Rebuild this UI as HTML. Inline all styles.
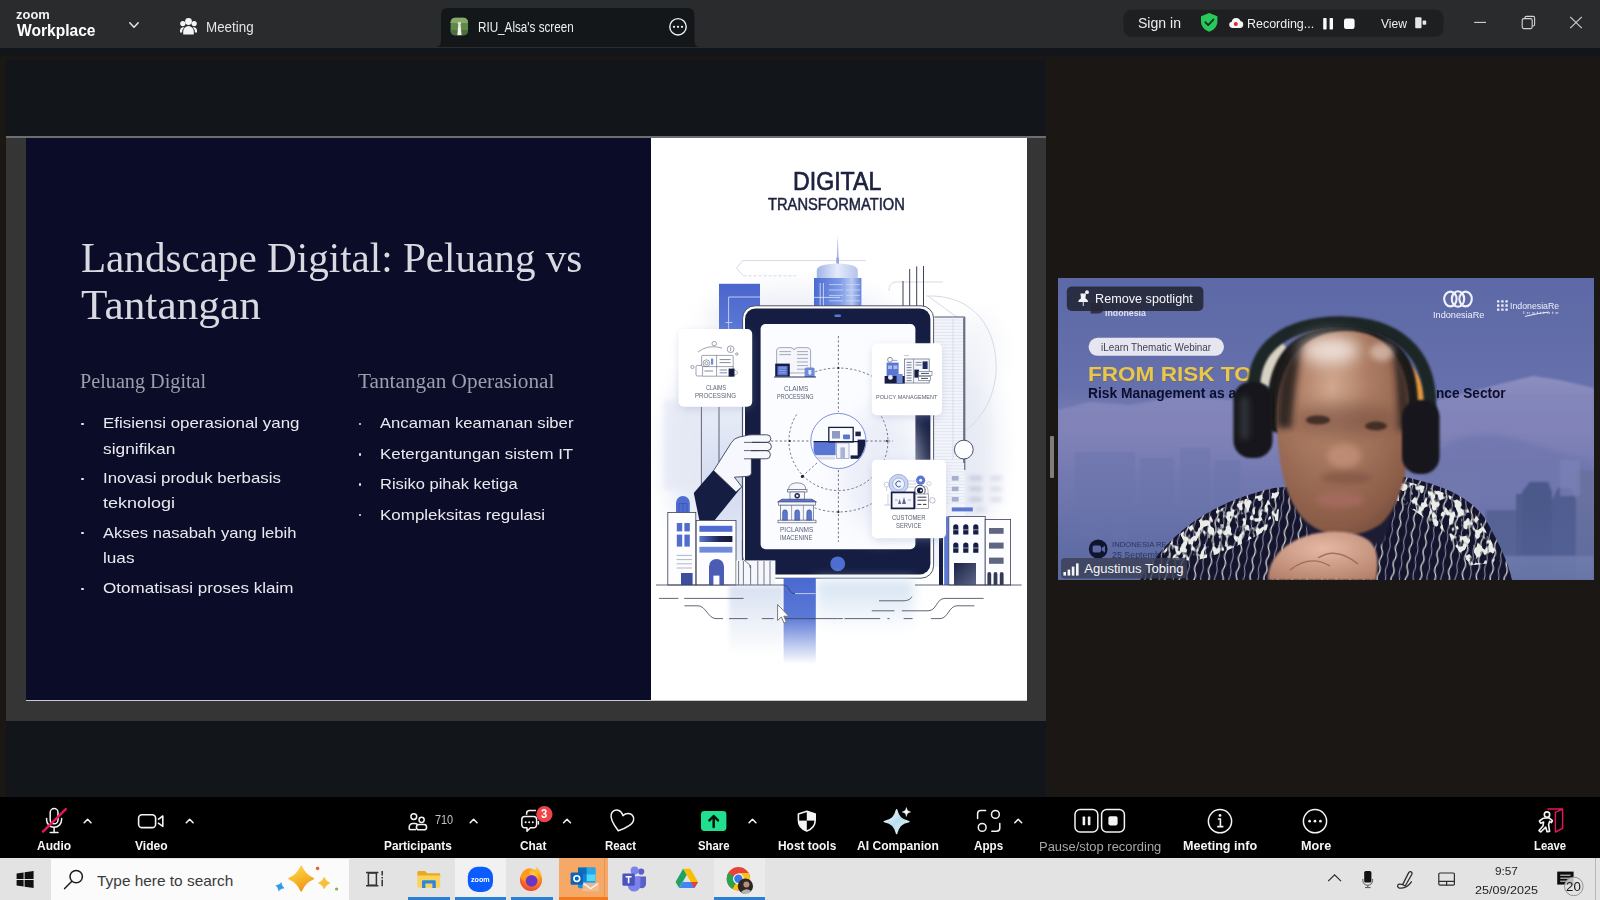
<!DOCTYPE html>
<html lang="en"><head><meta charset="utf-8"><title>Zoom Workplace</title>
<style>
html,body{margin:0;padding:0}
body{width:1600px;height:900px;overflow:hidden;background:#1a1715;position:relative;font-family:"Liberation Sans",sans-serif}
.b{position:absolute}
.t{position:absolute;white-space:pre;transform-origin:0 50%;display:block}
svg{position:absolute;left:0;top:0;overflow:visible}
</style></head><body>
<!-- s_frame -->
<div class="b" style="left:0px;top:0px;width:1600px;height:47.5px;background:#2a2b2d;"></div>
<div class="b" style="left:0px;top:47.5px;width:1600px;height:8.100000000000001px;background:#12161a;"></div>
<div class="b" style="left:6px;top:60px;width:1040px;height:737px;background:#12161a;"></div>
<svg width="1600" height="60"><path d="M435 47 Q441 47 441 41 L441 15 Q441 8 448 8 L687 8 Q694.5 8 694.5 15 L694.5 41 Q694.5 47 700.5 47 Z" fill="#13171a"/></svg>
<span class="t" style="left:15.98px;top:8px;font-size:13.20px;line-height:13.20px;font-family:'Liberation Sans',sans-serif;font-weight:700;color:#f2f2f2;transform:scaleX(0.9814);">zoom</span>
<span class="t" style="left:16.98px;top:22px;font-size:17.15px;line-height:17.15px;font-family:'Liberation Sans',sans-serif;font-weight:700;color:#ffffff;transform:scaleX(0.9089);">Workplace</span>
<svg width="1600" height="60"><path d="M129.8 22.8 L134 27.2 L138.2 22.8" fill="none" stroke="#e8e8e8" stroke-width="1.5" stroke-linecap="round" stroke-linejoin="round"/>
<g fill="#f4f4f4"><circle cx="188.5" cy="21.5" r="3.4"/><circle cx="182.8" cy="23.6" r="2.6"/><circle cx="194.2" cy="23.6" r="2.6"/><path d="M183.2 34.6 v-3.2 a5.3 5.3 0 0 1 10.6 0 v3.2 z"/><path d="M180 32.6 v-2.2 a3.3 3.3 0 0 1 4.3 -3.1 a7 7 0 0 0 -2.2 5.3 z"/><path d="M197 32.6 v-2.2 a3.3 3.3 0 0 0 -4.3 -3.1 a7 7 0 0 1 2.2 5.3 z"/></g>
<g><clipPath id="avc"><rect x="450.6" y="17.8" width="17.4" height="17.4" rx="4.5"/></clipPath><g clip-path="url(#avc)"><rect x="450" y="17" width="19" height="19" fill="#5f8a4a"/><rect x="450" y="17" width="19" height="6" fill="#86a868"/><rect x="450" y="30" width="19" height="6" fill="#4d6f3f"/><path d="M457.3 35.5 L458.2 25.5 Q459.3 22 460.6 25.5 L461.6 35.5 Z" fill="#f1f1ee"/><circle cx="459.4" cy="23.4" r="1.7" fill="#e9ddd0"/></g></g>
<g><circle cx="678" cy="26.8" r="8.2" fill="none" stroke="#f0f0f0" stroke-width="1.4"/><circle cx="674" cy="26.8" r="1.15" fill="#f0f0f0"/><circle cx="678" cy="26.8" r="1.15" fill="#f0f0f0"/><circle cx="682" cy="26.8" r="1.15" fill="#f0f0f0"/></g>
<rect x="1123.5" y="9.8" width="320" height="27" rx="8" fill="#1e1f21"/>
<path d="M1209.2 13 L1217.4 16.2 V21.5 C1217.4 26.6 1213.6 30.2 1209.2 31.8 C1204.8 30.2 1201 26.6 1201 21.5 V16.2 Z" fill="#28c95a"/><path d="M1205.3 22.2 L1208.2 25.1 L1213.4 19.6" fill="none" stroke="#10351e" stroke-width="1.9" stroke-linecap="round" stroke-linejoin="round"/>
<path d="M1232 28 a3.2 3.2 0 0 1 -0.3 -6.3 a4.6 4.6 0 0 1 8.8 -0.8 a3.6 3.6 0 0 1 -0.6 7.1 z" fill="#f6f6f6"/><circle cx="1235.8" cy="24" r="2" fill="#e02828"/>
<rect x="1323.2" y="18" width="3.4" height="11.6" rx="0.8" fill="#fafafa"/><rect x="1329.6" y="18" width="3.4" height="11.6" rx="0.8" fill="#fafafa"/><rect x="1344" y="18.6" width="10.6" height="10.4" rx="2.2" fill="#fafafa"/>
<rect x="1415.2" y="17.2" width="6.3" height="11" rx="1" fill="#e6e6e6"/><rect x="1422.6" y="20.6" width="3.6" height="4.2" rx="0.8" fill="#e6e6e6"/>
<g stroke="#d4d4d4" stroke-width="1.1" fill="none"><path d="M1474.2 22.4 H1486"/><rect x="1522.2" y="18.6" width="10" height="10" rx="1.6"/><path d="M1525 18.4 V17.6 Q1525 16.4 1526.4 16.4 H1533.2 Q1534.6 16.4 1534.6 17.8 V24.6 Q1534.6 26 1533.2 26 H1532.4"/><path d="M1570.2 16.8 L1581.8 28.2 M1581.8 16.8 L1570.2 28.2"/></g></svg>
<span class="t" style="left:206.20px;top:21px;font-size:13.95px;line-height:13.95px;font-family:'Liberation Sans',sans-serif;font-weight:400;color:#e4e4e4;transform:scaleX(0.9603);">Meeting</span>
<span class="t" style="left:477.64px;top:20px;font-size:14.24px;line-height:14.24px;font-family:'Liberation Sans',sans-serif;font-weight:400;color:#efefef;transform:scaleX(0.8203);">RIU_Alsa&#x27;s screen</span>
<span class="t" style="left:1137.56px;top:16px;font-size:14.83px;line-height:14.83px;font-family:'Liberation Sans',sans-serif;font-weight:400;color:#eeeeee;transform:scaleX(0.9472);">Sign in</span>
<span class="t" style="left:1247.38px;top:17px;font-size:13.66px;line-height:13.66px;font-family:'Liberation Sans',sans-serif;font-weight:400;color:#eeeeee;transform:scaleX(0.9119);">Recording...</span>
<span class="t" style="left:1380.95px;top:17px;font-size:13.66px;line-height:13.66px;font-family:'Liberation Sans',sans-serif;font-weight:400;color:#eeeeee;transform:scaleX(0.8863);">View</span>
<div class="b" style="left:1050px;top:436px;width:4px;height:42px;background:#807e7c;border-radius:1px;"></div>
<!-- s_slide -->
<div class="b" style="left:6px;top:136px;width:1040px;height:585px;background:#353535;"></div>
<div class="b" style="left:6px;top:136px;width:1040px;height:2px;background:#6d6e70;"></div>
<div class="b" style="left:26px;top:138px;width:625px;height:562px;background:#0b0c27;"></div>
<div class="b" style="left:651px;top:138px;width:376px;height:562px;background:#ffffff;"></div>
<div class="b" style="left:26px;top:700px;width:1001px;height:1px;background:#c9c9cf;"></div>
<span class="t" style="left:80.51px;top:237px;font-size:42.14px;line-height:42.14px;font-family:'Liberation Serif',serif;font-weight:400;color:#d9d9e2;transform:scaleX(0.9761);">Landscape Digital: Peluang vs</span>
<span class="t" style="left:80.92px;top:284px;font-size:42.14px;line-height:42.14px;font-family:'Liberation Serif',serif;font-weight:400;color:#d9d9e2;transform:scaleX(1.0288);">Tantangan</span>
<span class="t" style="left:80.42px;top:371px;font-size:20.00px;line-height:20.00px;font-family:'Liberation Serif',serif;font-weight:400;color:#9d9eab;transform:scaleX(1.0097);">Peluang Digital</span>
<span class="t" style="left:358.02px;top:371px;font-size:20.00px;line-height:20.00px;font-family:'Liberation Serif',serif;font-weight:400;color:#9d9eab;transform:scaleX(1.0638);">Tantangan Operasional</span>
<span class="t" style="left:102.60px;top:415px;font-size:15.41px;line-height:15.41px;font-family:'Liberation Sans',sans-serif;font-weight:400;color:#e9e9ef;transform:scaleX(1.0975);">Efisiensi operasional yang</span>
<span class="t" style="left:102.60px;top:441px;font-size:15.41px;line-height:15.41px;font-family:'Liberation Sans',sans-serif;font-weight:400;color:#e9e9ef;transform:scaleX(1.1258);">signifikan</span>
<span class="t" style="left:102.60px;top:470px;font-size:15.41px;line-height:15.41px;font-family:'Liberation Sans',sans-serif;font-weight:400;color:#e9e9ef;transform:scaleX(1.0937);">Inovasi produk berbasis</span>
<span class="t" style="left:102.60px;top:495px;font-size:15.41px;line-height:15.41px;font-family:'Liberation Sans',sans-serif;font-weight:400;color:#e9e9ef;transform:scaleX(1.1674);">teknologi</span>
<span class="t" style="left:102.60px;top:525px;font-size:15.41px;line-height:15.41px;font-family:'Liberation Sans',sans-serif;font-weight:400;color:#e9e9ef;transform:scaleX(1.0754);">Akses nasabah yang lebih</span>
<span class="t" style="left:102.60px;top:550px;font-size:15.41px;line-height:15.41px;font-family:'Liberation Sans',sans-serif;font-weight:400;color:#e9e9ef;transform:scaleX(1.1150);">luas</span>
<span class="t" style="left:102.60px;top:580px;font-size:15.41px;line-height:15.41px;font-family:'Liberation Sans',sans-serif;font-weight:400;color:#e9e9ef;transform:scaleX(1.1068);">Otomatisasi proses klaim</span>
<span class="t" style="left:380.40px;top:415px;font-size:15.41px;line-height:15.41px;font-family:'Liberation Sans',sans-serif;font-weight:400;color:#e9e9ef;transform:scaleX(1.0807);">Ancaman keamanan siber</span>
<span class="t" style="left:380.40px;top:446px;font-size:15.41px;line-height:15.41px;font-family:'Liberation Sans',sans-serif;font-weight:400;color:#e9e9ef;transform:scaleX(1.0948);">Ketergantungan sistem IT</span>
<span class="t" style="left:380.40px;top:476px;font-size:15.41px;line-height:15.41px;font-family:'Liberation Sans',sans-serif;font-weight:400;color:#e9e9ef;transform:scaleX(1.0710);">Risiko pihak ketiga</span>
<span class="t" style="left:380.40px;top:507px;font-size:15.41px;line-height:15.41px;font-family:'Liberation Sans',sans-serif;font-weight:400;color:#e9e9ef;transform:scaleX(1.1018);">Kompleksitas regulasi</span>
<div class="b" style="left:81.4px;top:422.7px;width:2.299999999999997px;height:2.3000000000000114px;background:#e8e8f0;border-radius:1px;"></div>
<div class="b" style="left:81.4px;top:477.7px;width:2.299999999999997px;height:2.3000000000000114px;background:#e8e8f0;border-radius:1px;"></div>
<div class="b" style="left:81.4px;top:532.0px;width:2.299999999999997px;height:2.2999999999999545px;background:#e8e8f0;border-radius:1px;"></div>
<div class="b" style="left:81.4px;top:587.7px;width:2.299999999999997px;height:2.2999999999999545px;background:#e8e8f0;border-radius:1px;"></div>
<div class="b" style="left:359px;top:422.8px;width:2.3000000000000114px;height:2.3000000000000114px;background:#e8e8f0;border-radius:1px;"></div>
<div class="b" style="left:359px;top:453.4px;width:2.3000000000000114px;height:2.3000000000000114px;background:#e8e8f0;border-radius:1px;"></div>
<div class="b" style="left:359px;top:483.4px;width:2.3000000000000114px;height:2.3000000000000114px;background:#e8e8f0;border-radius:1px;"></div>
<div class="b" style="left:359px;top:514.0px;width:2.3000000000000114px;height:2.2999999999999545px;background:#e8e8f0;border-radius:1px;"></div>
<!-- s_illus -->
<svg width="1600" height="900">
<defs><clipPath id="ilc"><rect x="651" y="138" width="376" height="562"/></clipPath><filter id="bl6" x="-30%" y="-30%" width="160%" height="160%"><feGaussianBlur stdDeviation="6"/></filter><filter id="bl12" x="-40%" y="-40%" width="180%" height="180%"><feGaussianBlur stdDeviation="12"/></filter><filter id="bl2" x="-30%" y="-30%" width="160%" height="160%"><feGaussianBlur stdDeviation="2"/></filter><filter id="sh" x="-30%" y="-30%" width="160%" height="160%"><feGaussianBlur stdDeviation="4"/></filter><linearGradient id="gb1" x1="0" y1="0" x2="0" y2="1"><stop offset="0" stop-color="#4a66cc"/><stop offset="0.55" stop-color="#6f8cdf"/><stop offset="1" stop-color="#c9d4f0"/></linearGradient><linearGradient id="gtw" x1="0" y1="0" x2="1" y2="0"><stop offset="0" stop-color="#4c6bd0"/><stop offset="0.55" stop-color="#7d9ae6"/><stop offset="0.8" stop-color="#b9c9f2"/><stop offset="1" stop-color="#6482d8"/></linearGradient><linearGradient id="gdm" x1="0" y1="0" x2="1" y2="0"><stop offset="0" stop-color="#9fb3e6"/><stop offset="0.5" stop-color="#e4ebfa"/><stop offset="1" stop-color="#b5c4ec"/></linearGradient><linearGradient id="gcol" x1="0" y1="0" x2="0" y2="1"><stop offset="0" stop-color="#4a69d0"/><stop offset="0.45" stop-color="#5a78d6"/><stop offset="1" stop-color="#5a78d6" stop-opacity="0"/></linearGradient><linearGradient id="ghz" x1="0" y1="0" x2="0" y2="1"><stop offset="0" stop-color="#d9e1f1"/><stop offset="1" stop-color="#d9e1f1" stop-opacity="0"/></linearGradient><linearGradient id="ghz2" x1="0" y1="0" x2="0" y2="1"><stop offset="0" stop-color="#d3e2f2"/><stop offset="1" stop-color="#d3e2f2" stop-opacity="0"/></linearGradient><linearGradient id="gpil" x1="0" y1="0" x2="0" y2="1"><stop offset="0" stop-color="#e9edf8"/><stop offset="0.5" stop-color="#d3dbf0"/><stop offset="1" stop-color="#e8ecf7"/></linearGradient><linearGradient id="gdoor" x1="0" y1="0" x2="1" y2="1"><stop offset="0" stop-color="#1a2244"/><stop offset="1" stop-color="#5d6788"/></linearGradient><linearGradient id="gbar2" x1="0" y1="0" x2="1" y2="0"><stop offset="0" stop-color="#5a78d4"/><stop offset="0.6" stop-color="#1c2550"/><stop offset="1" stop-color="#131a3c"/></linearGradient></defs>
<g clip-path="url(#ilc)">
<ellipse cx="800" cy="322" rx="95" ry="34" fill="#e9ecf6" opacity="0.8" filter="url(#bl12)"/><ellipse cx="962" cy="450" rx="34" ry="95" fill="#e4e8f3" opacity="0.9" filter="url(#bl12)"/><ellipse cx="700" cy="455" rx="34" ry="80" fill="#e3e8f5" opacity="0.85" filter="url(#bl12)"/><ellipse cx="975" cy="350" rx="22" ry="36" fill="#eef0f7" opacity="0.7" filter="url(#bl12)"/>
<g fill="none" stroke="#d6dae6" stroke-width="1"><path d="M742.6 260.6 H866 M736.4 268.4 L742.6 260.6 M736.4 268.4 L743.6 275.8" /><path d="M743.6 275.8 H796" stroke-dasharray="3 2"/><path d="M926 296 C975 294 998 330 996 372 C994 400 980 420 966 430"/><path d="M895 282 H943 M895 282 q-6 1 -6 9"/><path d="M928 296 L958 318"/></g>
<rect x="719" y="283.8" width="41" height="180" fill="url(#gb1)"/><path d="M728.6 331 V297 H760" fill="none" stroke="#c9d5f6" stroke-width="0.9"/><path d="M725.6 322.6 H732.4" stroke="#c9d5f6" stroke-width="0.9"/>
<rect x="701.4" y="406" width="41" height="160" fill="url(#gpil)"/><rect x="664" y="400" width="38" height="90" fill="#e4e8f4" opacity="0.7" filter="url(#bl2)"/><g stroke="#3b4056" stroke-width="0.8"><path d="M701.4 407 V500 M719 407 V470 M742.4 407 V560"/></g>
<path d="M837.7 235.4 L836.6 262 H838.8 Z" fill="#aab9e2"/><rect x="836.4" y="257.6" width="2.6" height="6.6" fill="#93a6dc"/><path d="M816.8 278.4 V270.4 Q816.8 264 837.6 263.4 Q857.8 264 857.8 270.4 V278.4 Z" fill="url(#gdm)"/><rect x="814" y="278" width="47.4" height="30" fill="url(#gtw)"/><g stroke="#dfe7fb" stroke-width="0.8"><path d="M820.2 283 V306 M823.4 283 V306 M814 297.4 H840"/><path d="M829 284.6 H843 M829 290 H843 M829 295.4 H843 M829 300.8 H843 M846 284.6 H860 M846 290 H860 M846 295.4 H860 M846 300.8 H860" stroke="#cbd8f8"/></g>
<g stroke="#3b4056" stroke-width="1"><path d="M903 281 V306 M909.7 269 V306 M916.7 266.4 V306 M923.5 266 V306"/></g>
<rect x="934.4" y="317" width="30.4" height="250" fill="#f3f5fb"/><path d="M934.4 320.0 H964.8" stroke="#d5dbec" stroke-width="0.6"/><path d="M934.4 323.1 H964.8" stroke="#d5dbec" stroke-width="0.6"/><path d="M934.4 326.2 H964.8" stroke="#d5dbec" stroke-width="0.6"/><path d="M934.4 329.3 H964.8" stroke="#d5dbec" stroke-width="0.6"/><path d="M934.4 332.4 H964.8" stroke="#d5dbec" stroke-width="0.6"/><path d="M934.4 335.5 H964.8" stroke="#d5dbec" stroke-width="0.6"/><path d="M934.4 338.6 H964.8" stroke="#d5dbec" stroke-width="0.6"/><path d="M934.4 341.7 H964.8" stroke="#d5dbec" stroke-width="0.6"/><path d="M934.4 344.8 H964.8" stroke="#d5dbec" stroke-width="0.6"/><path d="M934.4 347.9 H964.8" stroke="#d5dbec" stroke-width="0.6"/><path d="M934.4 351.0 H964.8" stroke="#d5dbec" stroke-width="0.6"/><path d="M934.4 354.1 H964.8" stroke="#d5dbec" stroke-width="0.6"/><path d="M934.4 357.2 H964.8" stroke="#d5dbec" stroke-width="0.6"/><path d="M934.4 360.3 H964.8" stroke="#d5dbec" stroke-width="0.6"/><path d="M934.4 363.4 H964.8" stroke="#d5dbec" stroke-width="0.6"/><path d="M934.4 366.5 H964.8" stroke="#d5dbec" stroke-width="0.6"/><path d="M934.4 369.6 H964.8" stroke="#d5dbec" stroke-width="0.6"/><path d="M934.4 372.7 H964.8" stroke="#d5dbec" stroke-width="0.6"/><path d="M934.4 375.8 H964.8" stroke="#d5dbec" stroke-width="0.6"/><path d="M934.4 378.9 H964.8" stroke="#d5dbec" stroke-width="0.6"/><path d="M934.4 382.0 H964.8" stroke="#d5dbec" stroke-width="0.6"/><path d="M934.4 385.1 H964.8" stroke="#d5dbec" stroke-width="0.6"/><path d="M934.4 388.2 H964.8" stroke="#d5dbec" stroke-width="0.6"/><path d="M934.4 391.3 H964.8" stroke="#d5dbec" stroke-width="0.6"/><path d="M934.4 394.4 H964.8" stroke="#d5dbec" stroke-width="0.6"/><path d="M934.4 397.5 H964.8" stroke="#d5dbec" stroke-width="0.6"/><path d="M934.4 400.6 H964.8" stroke="#d5dbec" stroke-width="0.6"/><path d="M934.4 403.7 H964.8" stroke="#d5dbec" stroke-width="0.6"/><path d="M934.4 406.8 H964.8" stroke="#d5dbec" stroke-width="0.6"/><path d="M934.4 409.9 H964.8" stroke="#d5dbec" stroke-width="0.6"/><path d="M934.4 413.0 H964.8" stroke="#d5dbec" stroke-width="0.6"/><path d="M934.4 416.1 H964.8" stroke="#d5dbec" stroke-width="0.6"/><path d="M934.4 419.2 H964.8" stroke="#d5dbec" stroke-width="0.6"/><path d="M934.4 422.3 H964.8" stroke="#d5dbec" stroke-width="0.6"/><path d="M934.4 425.4 H964.8" stroke="#d5dbec" stroke-width="0.6"/><path d="M934.4 428.5 H964.8" stroke="#d5dbec" stroke-width="0.6"/><path d="M934.4 431.6 H964.8" stroke="#d5dbec" stroke-width="0.6"/><path d="M934.4 434.7 H964.8" stroke="#d5dbec" stroke-width="0.6"/><path d="M934.4 437.8 H964.8" stroke="#d5dbec" stroke-width="0.6"/><path d="M934.4 440.9 H964.8" stroke="#d5dbec" stroke-width="0.6"/><path d="M934.4 444.0 H964.8" stroke="#d5dbec" stroke-width="0.6"/><path d="M934.4 447.1 H964.8" stroke="#d5dbec" stroke-width="0.6"/><path d="M934.4 450.2 H964.8" stroke="#d5dbec" stroke-width="0.6"/><path d="M934.4 453.3 H964.8" stroke="#d5dbec" stroke-width="0.6"/><path d="M934.4 456.4 H964.8" stroke="#d5dbec" stroke-width="0.6"/><path d="M934.4 459.5 H964.8" stroke="#d5dbec" stroke-width="0.6"/><path d="M934.4 462.6 H964.8" stroke="#d5dbec" stroke-width="0.6"/><path d="M934.4 465.7 H964.8" stroke="#d5dbec" stroke-width="0.6"/><path d="M934.4 468.8 H964.8" stroke="#d5dbec" stroke-width="0.6"/><path d="M934.4 471.9 H964.8" stroke="#d5dbec" stroke-width="0.6"/><path d="M934.4 475.0 H964.8" stroke="#d5dbec" stroke-width="0.6"/><path d="M934.4 478.1 H964.8" stroke="#d5dbec" stroke-width="0.6"/><path d="M934.4 481.2 H964.8" stroke="#d5dbec" stroke-width="0.6"/><path d="M934.4 484.3 H964.8" stroke="#d5dbec" stroke-width="0.6"/><path d="M934.4 487.4 H964.8" stroke="#d5dbec" stroke-width="0.6"/><path d="M934.4 490.5 H964.8" stroke="#d5dbec" stroke-width="0.6"/><path d="M934.4 493.6 H964.8" stroke="#d5dbec" stroke-width="0.6"/><path d="M934.4 496.7 H964.8" stroke="#d5dbec" stroke-width="0.6"/><path d="M934.4 499.8 H964.8" stroke="#d5dbec" stroke-width="0.6"/><path d="M934.4 502.9 H964.8" stroke="#d5dbec" stroke-width="0.6"/><path d="M934.4 317 H964.8 V470" fill="none" stroke="#3b4056" stroke-width="0.9"/><path d="M953 317 V460" stroke="#c9d0e4" stroke-width="0.6"/>
<g fill="#a7afca"><rect x="951.8" y="476" width="6.8" height="4.6"/><rect x="951.8" y="486.6" width="6.8" height="4.6"/><rect x="951.8" y="497" width="6.8" height="4.6"/></g><g fill="#c4cade" filter="url(#bl2)"><rect x="969" y="476" width="13" height="4.6"/><rect x="969" y="486.6" width="13" height="4.6"/><rect x="969" y="497" width="13" height="4.6"/><rect x="990" y="476" width="12" height="4.6" opacity="0.6"/><rect x="990" y="486.6" width="12" height="4.6" opacity="0.6"/><rect x="990" y="497" width="12" height="4.6" opacity="0.6"/><rect x="975" y="507" width="10" height="4.6" opacity="0.6"/></g><rect x="951.8" y="507.4" width="21" height="4" fill="#5a78d4"/>
<path d="M963.8 318 V440" stroke="#3b4056" stroke-width="0.9"/><circle cx="963.8" cy="449.6" r="9.4" fill="#fdfdff" stroke="#3b4056" stroke-width="0.9"/><path d="M963.8 459 V463" stroke="#3b4056" stroke-width="0.9"/>
<rect x="939" y="538" width="4" height="47" fill="#151d42"/><rect x="944.2" y="516.4" width="4.6" height="68.6" fill="#5a78d4"/><rect x="948.8" y="516.4" width="36.4" height="68.6" fill="#fbfcff" stroke="#3b4056" stroke-width="0.8"/><rect x="985.2" y="519.6" width="25.4" height="65.4" fill="#fdfdff" stroke="#3b4056" stroke-width="0.8"/>
<path d="M953.2 534.6 V526.8 a2.6 2.6 0 0 1 5.2 0 V534.6 Z" fill="#151d42"/><path d="M953.2 529.8 h5.2" stroke="#fbfcff" stroke-width="0.6"/><path d="M953.2 552.8 V545.0 a2.6 2.6 0 0 1 5.2 0 V552.8 Z" fill="#151d42"/><path d="M953.2 548.0 h5.2" stroke="#fbfcff" stroke-width="0.6"/><path d="M963.2 534.6 V526.8 a2.6 2.6 0 0 1 5.2 0 V534.6 Z" fill="#151d42"/><path d="M963.2 529.8 h5.2" stroke="#fbfcff" stroke-width="0.6"/><path d="M963.2 552.8 V545.0 a2.6 2.6 0 0 1 5.2 0 V552.8 Z" fill="#151d42"/><path d="M963.2 548.0 h5.2" stroke="#fbfcff" stroke-width="0.6"/><path d="M973.2 534.6 V526.8 a2.6 2.6 0 0 1 5.2 0 V534.6 Z" fill="#151d42"/><path d="M973.2 529.8 h5.2" stroke="#fbfcff" stroke-width="0.6"/><path d="M973.2 552.8 V545.0 a2.6 2.6 0 0 1 5.2 0 V552.8 Z" fill="#151d42"/><path d="M973.2 548.0 h5.2" stroke="#fbfcff" stroke-width="0.6"/><rect x="954" y="563" width="22" height="22" fill="url(#gdoor)"/><g fill="#5e6681"><rect x="989" y="528" width="14.6" height="5.8"/><rect x="989" y="542.6" width="14.6" height="6"/><rect x="989" y="557.6" width="14.6" height="6.2"/></g><g fill="#343b58"><path d="M987.4 585 v-11 a1.9 1.9 0 0 1 3.8 0 v11 z"/><path d="M993.6 585 v-11 a1.9 1.9 0 0 1 3.8 0 v11 z"/><path d="M999.8 585 v-11 a1.9 1.9 0 0 1 3.8 0 v11 z"/></g>
<rect x="742.6" y="305.8" width="191" height="272.4" rx="12.5" fill="#ffffff" stroke="#3b4056" stroke-width="0.9"/><rect x="745" y="308.4" width="185.4" height="266" rx="10.5" fill="#151d42"/><rect x="760.6" y="324" width="154.8" height="225.2" rx="5" fill="#fbfcff"/><rect x="834.4" y="314.4" width="6.6" height="2.6" rx="1.3" fill="#5a78d4"/><circle cx="837.7" cy="563.8" r="7.4" fill="#4f6dd0"/>
<ellipse cx="880" cy="470" rx="38" ry="60" fill="#e9ecf7" filter="url(#bl12)" opacity="0.9"/>
<g fill="none" stroke="#4a4f66" stroke-width="0.8" stroke-dasharray="2.2 2.2"><path d="M838.4 336 V412 M838.4 470 V542"/><path d="M771 441 H811 M866 441 H893"/><path d="M876.3 409.2 A49.5 49.5 0 1 1 797.9 412.6"/><path d="M811.1 373.3 A73 73 0 0 1 885.3 385.1"/><path d="M876.0 501.2 A71 71 0 0 1 811.8 506.8"/><path d="M802.4 476.4 L818 462"/></g><circle cx="802.4" cy="476.4" r="1.6" fill="#20243a"/><circle cx="789.8" cy="441" r="1" fill="#20243a"/><circle cx="887" cy="441" r="1" fill="#20243a"/><circle cx="838.4" cy="368" r="1.1" fill="#20243a"/><circle cx="838.4" cy="512" r="1.1" fill="#20243a"/>
<circle cx="838.4" cy="441" r="27.6" fill="#fbfcff" stroke="#6f86cf" stroke-width="0.9"/><clipPath id="hubc"><circle cx="838.4" cy="441" r="27"/></clipPath><g clip-path="url(#hubc)"><rect x="813.6" y="441.6" width="22" height="13.6" fill="#5876d2"/><rect x="828.8" y="427.4" width="24.4" height="14.6" fill="#fbfcff" stroke="#151d42" stroke-width="1.3"/><rect x="832" y="431" width="8" height="7.6" fill="#8e9cc4"/><rect x="843" y="434.6" width="7" height="4.6" rx="1" fill="#5876d2"/><rect x="836.4" y="443" width="12.6" height="15.6" fill="#f3f5fc" stroke="#8088a8" stroke-width="0.6"/><rect x="840.4" y="447.4" width="4.6" height="10.6" fill="#a9b3d4"/><rect x="857.6" y="439.6" width="8" height="16.6" fill="#151d42"/><rect x="850.6" y="455.4" width="15" height="3.4" fill="#151d42"/><rect x="813.6" y="441" width="52" height="1.2" fill="#151d42"/><rect x="815" y="456.6" width="20" height="3" fill="#d7dcec"/><rect x="855.4" y="431.6" width="5.4" height="4.6" fill="#1e2547"/></g>
<g stroke="#6c728a" stroke-width="0.6" fill="#f4f6fb"><path d="M776.6 373 V351 Q776.6 347.6 781 347.6 H790 Q793.6 347.6 794 350 Q794.4 347.6 798 347.6 H806 Q810.6 347.6 810.6 351 V373 Z"/></g><g stroke="#9aa0b6" stroke-width="0.9"><path d="M779.4 351.6 H791 M779.4 354.6 H791 M797 351.6 H808 M797 354.6 H808 M797 358.4 H808 M797 362 H808 M797 365.6 H808 M797 369.2 H808"/></g><rect x="775.2" y="363.6" width="14.6" height="13" fill="#151d42"/><rect x="777.4" y="366" width="10.2" height="9.4" fill="#5876d2"/><path d="M779 368 h7 M779 370.4 h7 M779 372.8 h7" stroke="#a9bcf0" stroke-width="0.7"/><path d="M804.6 377 v-8 q0 -1.6 2 -1.6 h6 q2 0 2 1.6 v8 z" fill="#6f8ada"/><path d="M808.4 370 h3 v3.6 l-1.5 1.6 l-1.5 -1.6 z" fill="#dfe6fa"/><path d="M774 377 H816" stroke="#151d42" stroke-width="0.9"/>
<g fill="#f7f8fd" stroke="#5d6480" stroke-width="0.7"><path d="M788.6 489.6 q0 -6.6 8.6 -6.8 q8.6 0.2 8.6 6.8 z"/><rect x="787.4" y="489.6" width="19.6" height="2.4"/><rect x="790" y="492" width="14.4" height="7.4"/><path d="M777.6 502 L782 499.2 H812 L816.4 502 Z" fill="#5876d2" stroke="#3b4570"/><rect x="778.6" y="502" width="36.8" height="3.2"/><rect x="780.4" y="505.2" width="33.2" height="15"/><rect x="778" y="520.2" width="38" height="2.6"/></g><circle cx="797.2" cy="495.8" r="2.7" fill="#1e2547"/><circle cx="797.2" cy="495.8" r="1.3" fill="#e8ecf8"/><path d="M782.6 520.2 v-8 a2.4 2.4 0 0 1 4.8 0 v8 z" fill="#5876d2" stroke="#3b4570" stroke-width="0.5"/><path d="M794.8 520.2 v-8 a2.4 2.4 0 0 1 4.8 0 v8 z" fill="#5876d2" stroke="#3b4570" stroke-width="0.5"/><path d="M806.8 520.2 v-8 a2.4 2.4 0 0 1 4.8 0 v8 z" fill="#5876d2" stroke="#3b4570" stroke-width="0.5"/><path d="M791.6 505.2 V520 M803.4 505.2 V520" stroke="#5d6480" stroke-width="0.6"/>
<rect x="679.6" y="332" width="71.60000000000002" height="76.80000000000001" rx="6" fill="#8f9bc4" opacity="0.36" filter="url(#sh)"/><rect x="678.6" y="329" width="73.60000000000002" height="77.80000000000001" rx="5" fill="#ffffff"/><rect x="872.8" y="346.2" width="68.20000000000005" height="71.0" rx="6" fill="#8f9bc4" opacity="0.36" filter="url(#sh)"/><rect x="871.8" y="343.2" width="70.20000000000005" height="72.0" rx="5" fill="#ffffff"/><rect x="872.8" y="462.8" width="72.20000000000005" height="77.40000000000003" rx="6" fill="#8f9bc4" opacity="0.36" filter="url(#sh)"/><rect x="871.8" y="459.8" width="74.20000000000005" height="78.40000000000003" rx="5" fill="#ffffff"/>
<g fill="none" stroke="#5e647c" stroke-width="0.6"><rect x="701.6" y="355.4" width="31.6" height="20.8" rx="1"/><path d="M716.6 355.4 V376.2 M701.6 366.6 H733.2"/><path d="M698 352 q10 -8 24 -4"/><circle cx="714.2" cy="343.6" r="2.2"/><circle cx="730.6" cy="349.2" r="3.4"/><path d="M730.6 347.2 v4"/><rect x="696" y="365.4" width="6.6" height="10.6" rx="1.4" fill="#fff"/><circle cx="692.4" cy="367" r="1.6"/><circle cx="736.8" cy="354" r="1.2"/><circle cx="706.4" cy="363.2" r="3.4"/><circle cx="706.4" cy="363.2" r="1.6"/></g><g stroke="#8088a2" stroke-width="1"><path d="M719.6 359.6 H730.6 M719.6 362.6 H730.6 M704.4 371 H713 M719.6 370 H727 M719.6 372.8 H727"/></g><rect x="711" y="358.6" width="2.2" height="6" fill="#6f8ada"/><rect x="728.6" y="368.6" width="6" height="8" fill="#151d42"/><path d="M734.6 369.6 l3.4 3 l-3.4 3 z" fill="#fff" stroke="#5e647c" stroke-width="0.5"/>
<g transform="translate(0 10)"><rect x="886.6" y="352.6" width="12" height="13.6" fill="#5876d2"/><rect x="888" y="355.4" width="4" height="3.6" fill="#a9bcf0"/><rect x="893.4" y="355.4" width="4" height="3.6" fill="#a9bcf0"/><rect x="904.6" y="349" width="24.6" height="24" fill="#f6f7fc" stroke="#5e647c" stroke-width="0.7"/><path d="M913.6 349 V373" stroke="#5e647c" stroke-width="0.6"/><g stroke="#7a8098" stroke-width="1"><path d="M906.6 352.4 H911.6 M906.6 355 H911.6 M906.6 357.6 H911.6 M906.6 360.2 H911.6 M906.6 362.8 H911.6 M906.6 365.4 H911.6 M906.6 368 H911.6 M906.6 370.6 H911.6 M915.6 352.4 H921.6 M915.6 355 H921.6"/></g><rect x="922.6" y="351.4" width="5" height="7.6" fill="#1e2a5c"/><rect x="914.4" y="359.6" width="4.6" height="8" fill="#151d42"/><rect x="918.6" y="361.4" width="13.4" height="4" fill="#fff" stroke="#5e647c" stroke-width="0.6"/><rect x="918.6" y="366.4" width="12" height="4" fill="#fff" stroke="#5e647c" stroke-width="0.6"/><path d="M921 363.4 h8 M921 368.4 h7" stroke="#30364f" stroke-width="0.9"/><path d="M884.6 373.6 H904.6 V366 H884.6 Z" fill="#151d42"/><circle cx="890.4" cy="367.4" r="2.4" fill="#e8ecf8"/><rect x="896.6" y="364" width="6" height="9" fill="#6f8ada"/><circle cx="890" cy="349.8" r="2.4" fill="none" stroke="#5e647c" stroke-width="0.7"/><path d="M892.4 350.4 h5" stroke="#5e647c" stroke-width="0.6"/><path d="M904 345.6 h5" stroke="#9aa0b6" stroke-width="0.6"/></g>
<circle cx="898.6" cy="484" r="9.6" fill="#c9d5f3" stroke="#7f92cc" stroke-width="0.7"/><circle cx="898.6" cy="484" r="6" fill="#eef2fc" stroke="#7f92cc" stroke-width="0.6"/><path d="M900.8 482 a2.9 2.9 0 1 0 0 4" fill="none" stroke="#4c5a8c" stroke-width="1"/><circle cx="920.6" cy="480.2" r="4.6" fill="#5876d2"/><circle cx="920.6" cy="480.2" r="1.5" fill="#fff"/><path d="M908 481 h10 M908 484 h8 M908 487 h9" stroke="#b3bdd8" stroke-width="0.7"/><circle cx="920" cy="490.4" r="5.2" fill="#fff" stroke="#30364f" stroke-width="0.9"/><circle cx="920" cy="490.6" r="3" fill="#151d42"/><circle cx="921" cy="490.6" r="1" fill="#fff"/><path d="M924 486 q4 0 4 4 v4" fill="none" stroke="#8a90a8" stroke-width="0.6"/><circle cx="929" cy="483.6" r="2" fill="none" stroke="#aab0c6" stroke-width="0.6"/><circle cx="886.6" cy="484.6" r="2.4" fill="none" stroke="#aab0c6" stroke-width="0.6"/><path d="M886.6 487 v4" stroke="#aab0c6" stroke-width="0.6"/><rect x="891.6" y="492.4" width="22.6" height="16" fill="#f4f6fc" stroke="#151d42" stroke-width="1.7"/><path d="M898 504 l1.6 -5 l1.6 5 z M902 504 l2 -7 l2 7 z" fill="#5e6890"/><path d="M895 500 h2.6 M908 500 h3" stroke="#7f92cc" stroke-width="0.8"/><rect x="915.6" y="494" width="13" height="14.4" fill="#fff" stroke="#5e647c" stroke-width="0.6"/><path d="M917.4 497.2 h9 M917.4 500.2 h9 M917.4 504.4 h4 M923 504.4 h3.4" stroke="#30364f" stroke-width="1"/><circle cx="932.4" cy="500.4" r="2.7" fill="none" stroke="#8a90a8" stroke-width="0.6"/><path d="M884 505 h7 M888 494 v11" stroke="#aab0c6" stroke-width="0.6"/>
<path d="M713.6 470 L741.8 486.8 L714.4 520.6 H699.4 L693.8 493 Z" fill="#151d42"/><path d="M713.6 470.6 L731.4 442.6 Q734 438 739.4 437 L744.4 436 Q748 434.8 752 434.8 H766.8 Q770.8 434.8 770.8 438.6 Q770.8 442.4 766.8 442.4 H752 H767.4 Q771.4 442.6 771.4 446.6 Q771.4 450.4 767.4 450.6 H751 H766.6 Q770.4 450.8 770.4 454.8 Q770.4 458.8 766.4 458.8 H751.4 V472.6 Q751.4 476 747 476.4 L734.4 477.2 L741.8 486.8 L736 492 Z" fill="#f6f8fd" stroke="#3b4056" stroke-width="0.9" stroke-linejoin="round"/><path d="M744 442.4 H760 M744 450.6 H759 M744 458.8 H752" stroke="#3b4056" stroke-width="0.8" fill="none"/>
<path d="M676 512.6 V503 a6.9 6.9 0 0 1 13.8 0 V512.6 Z" fill="#4f6dd0"/><path d="M679 512.6 V503.6 h8 V512.6 M683 503.6 V512.6" fill="none" stroke="#2f4aa8" stroke-width="0.6"/><rect x="667.8" y="512.6" width="28" height="72.4" fill="#fdfdff" stroke="#3b4056" stroke-width="0.8"/><g fill="#4f6dd0"><rect x="676.8" y="523" width="5.4" height="8.4"/><rect x="684.4" y="523" width="5.4" height="8.4"/><rect x="676.8" y="534.6" width="5.4" height="12"/><rect x="684.4" y="534.6" width="5.4" height="12"/></g><g stroke="#8f96ad" stroke-width="0.7"><path d="M676.6 555.4 H692 M676.6 559.6 H692 M676.6 563.8 H692 M676.6 568 H692"/></g><rect x="681" y="573" width="11.6" height="12" fill="#3d4f9c"/><rect x="696.2" y="520.4" width="39.8" height="64.6" fill="#fdfdff" stroke="#3b4056" stroke-width="0.8"/><rect x="699.4" y="525.8" width="33" height="6" fill="#4f6dd0"/><rect x="699.4" y="536" width="33" height="6" fill="url(#gbar2)"/><rect x="699.4" y="546.8" width="33" height="5.8" fill="#6f8ada"/><path d="M709 585 v-18.6 a7.5 7.5 0 0 1 15 0 V585 z" fill="#4a5cb4"/><rect x="713.4" y="575.6" width="6" height="9.4" fill="#fdfdff"/>
<rect x="736.4" y="560.4" width="39" height="24.6" fill="#f6f7fc"/><g stroke="#3b4056" stroke-width="0.7"><path d="M738.6 561 V585 M743.4 561 V585 M750.6 565 V585 M757.8 561 V585 M764 561 V585 M770 561 V585"/><path d="M742.4 540 V556 q0 4 4 6 q4 2 4 6" fill="none"/></g>
<rect x="729" y="586" width="54.6" height="70" fill="url(#ghz)" filter="url(#bl2)"/><rect x="816" y="580" width="98" height="52" fill="url(#ghz2)" filter="url(#bl6)"/><rect x="783.6" y="578" width="32.2" height="86" fill="url(#gcol)"/><g stroke="#3b4056" stroke-width="0.8" fill="none"><path d="M656 585 H783 M915 585 H1021.6"/><path d="M659 598.4 H678.4 M684.2 598.4 H743.6"/><path d="M684.4 605.8 H698 C706 605.8 708 618.6 716 618.6 H723 M729 618.6 H747.6 M761.8 618.6 H773.6 M784 618.6 H837.8 M842.8 618.6 H838 M844.4 618.6 H880.2 M887.4 618.6 H889.6 M903.6 618.6 H912.6 M931 618.6 H940 C948 618.6 949 605.8 957 605.8 H974.4"/><path d="M879 600.8 H903 C908 600.8 911 599 911.8 596.6"/><path d="M871.8 610.8 H894.4 M901.8 610.8 H928 C937 610.8 936 598.4 945 598.4 H983.6"/><path d="M782.8 585 C790 585 788 593.6 795 593.6"/></g><path d="M795 593.6 H815.6" stroke="#c7d3f3" stroke-width="0.9"/>
<path d="M777.6 604.6 V620.4 L781.4 617 L784 623 L786.4 622 L783.8 616.2 H788.8 Z" fill="#ffffff" stroke="#6c6c6c" stroke-width="0.9" stroke-linejoin="round"/>
</g></svg>
<span class="t" style="left:793.30px;top:169px;font-size:25.00px;line-height:25.00px;font-family:'Liberation Sans',sans-serif;font-weight:400;color:#1c2240;transform:scaleX(0.9253);-webkit-text-stroke:0.7px #1c2240;">DIGITAL</span>
<span class="t" style="left:768.47px;top:197px;font-size:15.99px;line-height:15.99px;font-family:'Liberation Sans',sans-serif;font-weight:400;color:#1c2240;transform:scaleX(0.9193);-webkit-text-stroke:0.5px #1c2240;">TRANSFORMATION</span>
<span class="t" style="left:705.73px;top:385px;font-size:6.69px;line-height:6.69px;font-family:'Liberation Sans',sans-serif;font-weight:400;color:#5b6076;transform:scaleX(0.8078);">CLAIMS</span>
<span class="t" style="left:694.70px;top:393px;font-size:6.69px;line-height:6.69px;font-family:'Liberation Sans',sans-serif;font-weight:400;color:#5b6076;transform:scaleX(0.9182);">PROCESSING</span>
<span class="t" style="left:783.67px;top:386px;font-size:6.69px;line-height:6.69px;font-family:'Liberation Sans',sans-serif;font-weight:400;color:#5b6076;transform:scaleX(0.9727);">CLAIMS</span>
<span class="t" style="left:777.35px;top:394px;font-size:6.69px;line-height:6.69px;font-family:'Liberation Sans',sans-serif;font-weight:400;color:#5b6076;transform:scaleX(0.8218);">PROCESSING</span>
<span class="t" style="left:875.95px;top:394px;font-size:6.10px;line-height:6.10px;font-family:'Liberation Sans',sans-serif;font-weight:400;color:#5b6076;transform:scaleX(0.9069);">POLICY MANAGEMENT</span>
<span class="t" style="left:892.30px;top:514px;font-size:6.98px;line-height:6.98px;font-family:'Liberation Sans',sans-serif;font-weight:400;color:#5b6076;transform:scaleX(0.8432);">CUSTOMER</span>
<span class="t" style="left:896.13px;top:522px;font-size:6.98px;line-height:6.98px;font-family:'Liberation Sans',sans-serif;font-weight:400;color:#5b6076;transform:scaleX(0.8361);">SERVICE</span>
<span class="t" style="left:780.06px;top:527px;font-size:6.69px;line-height:6.69px;font-family:'Liberation Sans',sans-serif;font-weight:400;color:#5b6076;transform:scaleX(0.9776);">PICLANMS</span>
<span class="t" style="left:780.06px;top:535px;font-size:6.69px;line-height:6.69px;font-family:'Liberation Sans',sans-serif;font-weight:400;color:#5b6076;transform:scaleX(0.8713);">IMACENINE</span>
<!-- s_video -->
<svg width="1600" height="900">
<defs><clipPath id="vc"><rect x="1058" y="278" width="536" height="302"/></clipPath><linearGradient id="vbg" x1="0" y1="0" x2="0" y2="1"><stop offset="0" stop-color="#5d69a6"/><stop offset="0.36" stop-color="#6570ac"/><stop offset="0.5" stop-color="#7e80b6"/><stop offset="0.72" stop-color="#6f76ae"/><stop offset="1" stop-color="#5f6ca6"/></linearGradient><linearGradient id="vmt" x1="0" y1="0" x2="0" y2="1"><stop offset="0" stop-color="#8e8fc0"/><stop offset="1" stop-color="#7d80b6" stop-opacity="0.2"/></linearGradient><radialGradient id="vface" cx="0.42" cy="0.28" r="0.9"><stop offset="0" stop-color="#d2a890"/><stop offset="0.3" stop-color="#ad7d64"/><stop offset="0.75" stop-color="#8a5c47"/><stop offset="1" stop-color="#5e3c30"/></radialGradient><radialGradient id="vhand" cx="0.5" cy="0.35" r="0.8"><stop offset="0" stop-color="#e6b8a4"/><stop offset="1" stop-color="#b07c66"/></radialGradient><filter id="vb1" x="-20%" y="-20%" width="140%" height="140%"><feGaussianBlur stdDeviation="1.2"/></filter><filter id="vb3" x="-100%" y="-100%" width="300%" height="300%"><feGaussianBlur stdDeviation="3"/></filter><filter id="vb8" x="-150%" y="-150%" width="400%" height="400%"><feGaussianBlur stdDeviation="8"/></filter><pattern id="batik" width="14" height="16" patternUnits="userSpaceOnUse" patternTransform="rotate(8)"><rect width="14" height="16" fill="#14142e"/><path d="M3 0 q2 4 0 8 q-2 4 0 8" stroke="#d9dbd4" stroke-width="1.3" fill="none"/><path d="M10 0 q-1.6 4 0 8 q1.6 4 0 8" stroke="#b9bdc6" stroke-width="0.8" fill="none"/></pattern><pattern id="batik2" width="12" height="12" patternUnits="userSpaceOnUse" patternTransform="rotate(-28)"><rect width="12" height="12" fill="#d5d8d0"/><circle cx="3.4" cy="3.4" r="2.9" fill="#15163a"/><circle cx="9.2" cy="9" r="2.5" fill="#15163a"/><path d="M0 8 q3 -2 6 0" stroke="#2b2d58" stroke-width="1" fill="none"/></pattern></defs>
<g clip-path="url(#vc)">
<rect x="1058" y="278" width="536" height="302" fill="url(#vbg)"/>
<path d="M1058 410 L1090 402 L1130 405 L1180 396 L1240 401 L1430 402 L1470 392 L1500 384 L1533 376 L1560 380 L1594 388 V470 H1058 Z" fill="url(#vmt)" filter="url(#vb1)"/>
<path d="M1420 470 C1440 440 1470 432 1500 436 C1530 440 1550 452 1594 462 V520 H1420 Z" fill="#6f76ae" opacity="0.8" filter="url(#vb3)"/>
<g fill="#6b74ac" opacity="0.55" filter="url(#vb1)"><rect x="1075" y="452" width="60" height="60"/><rect x="1140" y="458" width="34" height="50"/><rect x="1180" y="448" width="30" height="70"/><rect x="1080" y="490" width="22" height="50"/><rect x="1110" y="496" width="20" height="44"/><rect x="1214" y="460" width="26" height="60"/></g>
<g filter="url(#vb1)"><rect x="1486" y="510" width="30" height="70" fill="#566292"/><rect x="1516" y="494" width="16" height="86" fill="#4f5b8c"/><path d="M1522 580 V492 L1530 482 L1548 482 L1552 492 V580 Z" fill="#4b588a"/><path d="M1552 580 V500 L1558 488 L1572 488 L1576 500 V580 Z" fill="#505d90"/><rect x="1576" y="470" width="18" height="110" fill="#68719f"/><rect x="1500" y="556" width="94" height="24" fill="#7f8bb8" opacity="0.8"/><rect x="1440" y="470" width="40" height="60" fill="#7078ae" opacity="0.6"/><rect x="1560" y="460" width="20" height="36" fill="#7a82b6" opacity="0.7"/></g>
<linearGradient id="vbh" x1="0" y1="0" x2="0" y2="1"><stop offset="0" stop-color="#56669c" stop-opacity="0"/><stop offset="1" stop-color="#56669c" stop-opacity="0.5"/></linearGradient><rect x="1058" y="500" width="536" height="80" fill="url(#vbh)"/>
<g fill="none" stroke="#f0f1f8" stroke-width="2.1"><ellipse cx="1450.4" cy="299" rx="6.2" ry="7.4"/><ellipse cx="1458" cy="299" rx="6.2" ry="7.8"/><ellipse cx="1465.6" cy="299" rx="6.2" ry="7.4"/></g>
<g fill="#eceef8"><rect x="1497.0" y="300.2" width="2.4" height="2.4" rx="0.5"/><rect x="1497.0" y="304.3" width="2.4" height="2.4" rx="0.5"/><rect x="1497.0" y="308.4" width="2.4" height="2.4" rx="0.5"/><rect x="1501.2" y="300.2" width="2.4" height="2.4" rx="0.5"/><rect x="1501.2" y="304.3" width="2.4" height="2.4" rx="0.5"/><rect x="1501.2" y="308.4" width="2.4" height="2.4" rx="0.5"/><rect x="1505.4" y="300.2" width="2.4" height="2.4" rx="0.5"/><rect x="1505.4" y="304.3" width="2.4" height="2.4" rx="0.5"/><rect x="1505.4" y="308.4" width="2.4" height="2.4" rx="0.5"/></g><path d="M1525 316.4 q14 -3.4 24 -4.4" stroke="#eceef8" stroke-width="1" fill="none"/>
<path d="M1090.6 303 h8 q4.6 0.6 4.6 5.6 q0 4.6 -4.6 5 h-8 z" fill="#2a2438" opacity="0.85"/>
<rect x="1088.6" y="337.8" width="135.4" height="18" rx="9" fill="#e5e6f0"/>
<circle cx="1098.2" cy="549" r="9.4" fill="#10152f"/><rect x="1092.6" y="545.4" width="8.4" height="7" rx="1.6" fill="#5d69a6"/><path d="M1101.6 548 l3.4 -2.2 v6.6 l-3.4 -2.2 z" fill="#5d69a6"/>
</g></svg>
<span class="t" style="left:1105.41px;top:309px;font-size:9.30px;line-height:9.30px;font-family:'Liberation Sans',sans-serif;font-weight:700;color:#e9ebf6;transform:scaleX(0.9429);opacity:0.92;">Indonesia</span>
<span class="t" style="left:1100.94px;top:342px;font-size:10.76px;line-height:10.76px;font-family:'Liberation Sans',sans-serif;font-weight:400;color:#3d3f55;transform:scaleX(0.9199);">iLearn Thematic Webinar</span>
<span class="t" style="left:1087.69px;top:364px;font-size:20.93px;line-height:20.93px;font-family:'Liberation Sans',sans-serif;font-weight:700;color:#e9c74c;transform:scaleX(1.0778);text-shadow:0.6px 1px 0 #6b6a74;">FROM RISK TO</span>
<span class="t" style="left:1088.28px;top:387px;font-size:13.95px;line-height:13.95px;font-family:'Liberation Sans',sans-serif;font-weight:700;color:#0c0e2c;transform:scaleX(0.9906);">Risk Management as a</span>
<span class="t" style="left:1435.50px;top:387px;font-size:13.95px;line-height:13.95px;font-family:'Liberation Sans',sans-serif;font-weight:700;color:#0c0e2c;transform:scaleX(0.9772);">nce Sector</span>
<span class="t" style="left:1432.95px;top:311px;font-size:9.01px;line-height:9.01px;font-family:'Liberation Sans',sans-serif;font-weight:400;color:#eef0f8;transform:scaleX(1.0170);">IndonesiaRe</span>
<span class="t" style="left:1510.39px;top:302px;font-size:9.30px;line-height:9.30px;font-family:'Liberation Sans',sans-serif;font-weight:400;color:#eef0f8;transform:scaleX(0.9421);">IndonesiaRe</span>
<span class="t" style="left:1523.42px;top:311px;font-size:4.22px;line-height:4.22px;font-family:'Liberation Sans',sans-serif;font-weight:400;color:#e6e8f4;transform:scaleX(1.4843);">I n s t i t u t e</span>
<span class="t" style="left:1111.69px;top:541px;font-size:7.56px;line-height:7.56px;font-family:'Liberation Sans',sans-serif;font-weight:400;color:#2b3561;transform:scaleX(1.0180);">INDONESIA RE INSTITUTE</span>
<span class="t" style="left:1112.35px;top:551px;font-size:8.43px;line-height:8.43px;font-family:'Liberation Sans',sans-serif;font-weight:400;color:#2b3561;transform:scaleX(1.0536);">25 September 2025</span>
<svg width="1600" height="900"><defs><filter id="btk" x="0" y="0" width="100%" height="100%"><feTurbulence type="fractalNoise" baseFrequency="0.16 0.11" numOctaves="2" seed="7" result="n"/><feColorMatrix in="n" type="matrix" values="0 0 0 0 0.82  0 0 0 0 0.84  0 0 0 0 0.80  9 0 0 0 -4.4" result="c"/><feComposite in="c" in2="SourceGraphic" operator="in"/></filter></defs><g clip-path="url(#vc)">
<path d="M1140 580 C1150 562 1170 538 1196 520 C1220 504 1246 494 1274 488 L1400 476 C1440 484 1470 496 1486 520 C1500 545 1508 562 1512 580 Z" fill="url(#batik)"/><path d="M1160 556 C1176 534 1200 516 1232 504 C1246 498 1262 494 1280 492 L1278 522 C1262 534 1236 548 1212 556 C1196 562 1176 562 1160 556 Z" fill="#d6d9d2" filter="url(#btk)"/><path d="M1398 480 C1440 488 1468 500 1482 524 C1490 538 1496 550 1500 562 L1466 566 C1460 550 1450 536 1432 524 C1420 514 1408 506 1396 500 Z" fill="#d6d9d2" filter="url(#btk)"/>
<path d="M1286 490 L1316 544 L1384 544 L1402 476 Z" fill="#1f1d36" filter="url(#vb1)"/>
<path d="M1256 384 C1258 364 1266 350 1280 340 L1290 352 C1280 362 1276 374 1274 388 Z" fill="#d8d2c4" filter="url(#vb1)"/><path d="M1408 362 C1418 372 1426 388 1428 406 L1414 404 C1412 390 1408 378 1400 370 Z" fill="#e2973c" filter="url(#vb1)"/>
<path d="M1254 392 C1252 344 1290 323 1340 322.6 C1392 323 1432 348 1430 410" fill="none" stroke="#1f2528" stroke-width="12.5" stroke-linecap="round" filter="url(#vb1)"/>
<path d="M1268 430 C1262 374 1280 336 1322 329 C1362 323 1404 334 1414 372 C1420 396 1418 420 1416 436 L1398 436 L1394 372 L1300 366 L1288 436 Z" fill="#1e1a1a" filter="url(#vb1)"/><path d="M1277 430 C1273 368 1300 331 1346 331 C1392 331 1413 366 1409 432 C1409 470 1401 505 1381 524 C1369 532 1357 535 1345 535 C1327 535 1310 529 1298 512 C1284 492 1279 462 1277 430 Z" fill="url(#vface)" filter="url(#vb1)"/><path d="M1277 428 C1274 380 1286 350 1306 338 C1298 360 1294 392 1292 428 Z" fill="#241c1a" opacity="0.85" filter="url(#vb3)"/><path d="M1409 430 C1412 386 1404 356 1390 342 C1396 366 1398 396 1398 430 Z" fill="#241c1a" opacity="0.8" filter="url(#vb3)"/><ellipse cx="1330" cy="350" rx="30" ry="14" fill="#f6ece6" opacity="0.85" filter="url(#vb8)"/><ellipse cx="1382" cy="352" rx="12" ry="9" fill="#ead6ca" opacity="0.6" filter="url(#vb3)"/><ellipse cx="1346" cy="420" rx="52" ry="16" fill="#6f4a3a" opacity="0.55" filter="url(#vb8)"/><ellipse cx="1318" cy="420" rx="12" ry="4.6" fill="#33211c" opacity="0.8" filter="url(#vb1)"/><ellipse cx="1376" cy="426" rx="11" ry="4.4" fill="#33211c" opacity="0.8" filter="url(#vb1)"/><ellipse cx="1344" cy="456" rx="17" ry="12" fill="#c39078" opacity="0.8" filter="url(#vb3)"/><ellipse cx="1340" cy="500" rx="24" ry="7" fill="#a86a62" opacity="0.85" filter="url(#vb3)"/><ellipse cx="1346" cy="478" rx="26" ry="6" fill="#7a4e40" opacity="0.6" filter="url(#vb3)"/>
<rect x="1233.5" y="382" width="39" height="76" rx="17" fill="#15181a" filter="url(#vb1)"/><rect x="1402" y="400" width="37.5" height="74" rx="17" fill="#15181a" filter="url(#vb1)"/><rect x="1240" y="396" width="9" height="44" rx="4.5" fill="#3a3f44" opacity="0.7" filter="url(#vb3)"/>
<path d="M1268 580 C1268 560 1282 544 1306 536 C1326 529 1354 530 1368 540 C1380 549 1378 566 1376 580 Z" fill="url(#vhand)" filter="url(#vb1)"/><path d="M1290 570 q20 -16 40 -4 M1318 558 q18 -12 40 6" fill="none" stroke="#8a5a48" stroke-width="1.4" opacity="0.7"/>
</g>
<rect x="1066.8" y="286.4" width="136.6" height="24.6" rx="5" fill="#252838" fill-opacity="0.9"/><g fill="#f4f4f6"><path d="M1080.4 293.6 h5.6 l-0.6 4.6 q2.8 1.4 2.8 3.8 h-10 q0 -2.4 2.8 -3.8 z"/><rect x="1082.8" y="301.6" width="0.9" height="4.4"/><circle cx="1087" cy="292.2" r="1.9"/></g><rect x="1061" y="558" width="126.2" height="20.4" rx="4" fill="#3b3f55" fill-opacity="0.82"/><g fill="#f4f4f6"><rect x="1063.4" y="572" width="2.6" height="3.6"/><rect x="1067.6" y="569.6" width="2.6" height="6"/><rect x="1071.8" y="566.6" width="2.6" height="9"/><rect x="1076" y="563.4" width="2.6" height="12.2"/></g>
</svg>
<span class="t" style="left:1094.96px;top:292px;font-size:13.08px;line-height:13.08px;font-family:'Liberation Sans',sans-serif;font-weight:400;color:#f6f6f8;transform:scaleX(0.9671);">Remove spotlight</span>
<span class="t" style="left:1084.17px;top:562px;font-size:13.08px;line-height:13.08px;font-family:'Liberation Sans',sans-serif;font-weight:400;color:#f6f6f8;">Agustinus Tobing</span>
<!-- s_toolbar -->
<div class="b" style="left:0px;top:797px;width:1600px;height:61px;background:#000000;"></div>
<svg width="1600" height="900">
<g fill="none" stroke="#f4f4f4" stroke-width="1.5" stroke-linecap="round"><rect x="50.2" y="808.6" width="7.8" height="15.2" rx="3.9"/><path d="M46.6 818.6 v1.2 a7.5 7.5 0 0 0 15 0 v-1.2"/><path d="M54.1 827.4 V832.4 M50.2 832.6 H58"/></g><path d="M43 831.6 L65.8 809.2" stroke="#e9155d" stroke-width="2.4" stroke-linecap="round"/>
<path d="M84.2 822.7 L87.6 819.3 L91.0 822.7" fill="none" stroke="#f2f2f2" stroke-width="1.6" stroke-linecap="round" stroke-linejoin="round"/><g fill="none" stroke="#f4f4f4" stroke-width="1.6" stroke-linejoin="round"><rect x="138.6" y="814.8" width="17" height="12.8" rx="3.4"/><path d="M158 819.6 L162.8 816 V826.4 L158 822.8"/></g>
<path d="M186.3 822.7 L189.7 819.3 L193.1 822.7" fill="none" stroke="#f2f2f2" stroke-width="1.6" stroke-linecap="round" stroke-linejoin="round"/><g fill="none" stroke="#f4f4f4" stroke-width="1.5"><circle cx="413.8" cy="816.6" r="2.9"/><circle cx="421.6" cy="819.8" r="2.6"/><path d="M409.2 829.6 v-2.6 a3.6 3.6 0 0 1 3.6 -3.6 h2 a3.4 3.4 0 0 1 2.6 1.2"/><path d="M409.2 829.6 h6.8"/><rect x="416.4" y="824.6" width="10.2" height="5.2" rx="2.6"/></g>
<path d="M470.2 822.7 L473.6 819.3 L477.0 822.7" fill="none" stroke="#f2f2f2" stroke-width="1.6" stroke-linecap="round" stroke-linejoin="round"/><g fill="none" stroke="#f4f4f4" stroke-width="1.5" stroke-linejoin="round"><path d="M526.6 814.8 v-1.2 a3 3 0 0 1 3 -3 h6.4"/><path d="M538.4 821 v3.6"/><path d="M524.8 816.6 h8.8 a3 3 0 0 1 3 3 v5.2 a3 3 0 0 1 -3 3 h-3.2 l-3.4 3.4 v-3.4 h-2.2 a3 3 0 0 1 -3 -3 v-5.2 a3 3 0 0 1 3 -3 z"/></g><g fill="#f4f4f4"><circle cx="525.6" cy="822.2" r="1"/><circle cx="529.2" cy="822.2" r="1"/><circle cx="532.8" cy="822.2" r="1"/></g><circle cx="544.4" cy="814.2" r="8.1" fill="#ef4349"/>
<path d="M563.6 822.7 L567.0 819.3 L570.4 822.7" fill="none" stroke="#f2f2f2" stroke-width="1.6" stroke-linecap="round" stroke-linejoin="round"/><path d="M621.2 831.2 C614 826 609.6 821.6 609.6 817.2 C609.6 813.8 612.2 811.6 615 811.6 C617.6 811.6 619.8 813 621.2 815.4 C622.6 813 624.8 811.6 627.4 811.6 C630.2 811.6 632.8 813.8 632.8 817.2 C632.8 821.6 628.4 826 621.2 831.2 Z" fill="none" stroke="#f4f4f4" stroke-width="1.5" stroke-linejoin="round" transform="rotate(17 621.2 821.2)"/>
<rect x="701" y="811" width="25.4" height="20" rx="3.4" fill="#20e090"/><path d="M713.7 827 V816.4 M709.4 820.4 L713.7 816 L718 820.4" fill="none" stroke="#04140c" stroke-width="2.5" stroke-linecap="round" stroke-linejoin="round"/>
<path d="M749.1 822.7 L752.5 819.3 L755.9 822.7" fill="none" stroke="#f2f2f2" stroke-width="1.6" stroke-linecap="round" stroke-linejoin="round"/><clipPath id="shc"><path d="M806.8 811.2 L815.2 814 V820.2 C815.2 825.6 811.6 829.2 806.8 831 C802 829.2 798.4 825.6 798.4 820.2 V814 Z"/></clipPath><g clip-path="url(#shc)" fill="#f4f4f4"><rect x="806.8" y="808" width="10" height="12.6"/><rect x="796" y="820.6" width="10.8" height="12"/></g><path d="M806.8 811.2 L815.2 814 V820.2 C815.2 825.6 811.6 829.2 806.8 831 C802 829.2 798.4 825.6 798.4 820.2 V814 Z" fill="none" stroke="#f4f4f4" stroke-width="1.6" stroke-linejoin="round"/>
<defs><linearGradient id="aig" x1="0" y1="0" x2="1" y2="1"><stop offset="0" stop-color="#ffffff"/><stop offset="0.5" stop-color="#b8dcef"/><stop offset="1" stop-color="#f4fbff"/></linearGradient></defs><path d="M896.6 809.6 C898.4 817 901.2 819.8 909 821.6 C901.2 823.4 898.4 826.2 896.6 833.6 C894.8 826.2 892 823.4 884.2 821.6 C892 819.8 894.8 817 896.6 809.6 Z" fill="url(#aig)" stroke="url(#aig)" stroke-width="1.4" stroke-linejoin="round"/><path d="M906.4 807.6 C907 810.4 907.8 811.4 910.6 812 C907.8 812.6 907 813.6 906.4 816.4 C905.8 813.6 905 812.6 902.2 812 C905 811.4 905.8 810.4 906.4 807.6 Z" fill="#eef8ff" stroke="#eef8ff" stroke-width="0.5"/>
<g fill="none" stroke="#f4f4f4" stroke-width="1.5" stroke-linecap="round"><circle cx="995.4" cy="814.4" r="3.9"/><circle cx="982.2" cy="827.4" r="3.9"/><path d="M977.6 818.4 v-4.6 a3.2 3.2 0 0 1 3.2 -3.2 h4.8"/><path d="M999.8 823.4 v4.6 a3.2 3.2 0 0 1 -3.2 3.2 h-4.8"/></g>
<path d="M1014.8 822.7 L1018.2 819.3 L1021.6 822.7" fill="none" stroke="#f2f2f2" stroke-width="1.6" stroke-linecap="round" stroke-linejoin="round"/><g fill="none" stroke="#f4f4f4" stroke-width="1.5"><rect x="1075" y="809.6" width="22.8" height="22.4" rx="5"/><rect x="1101.6" y="809.6" width="22.8" height="22.4" rx="5"/></g><rect x="1082.6" y="816.6" width="2.6" height="8.6" rx="0.6" fill="#f4f4f4"/><rect x="1087.8" y="816.6" width="2.6" height="8.6" rx="0.6" fill="#f4f4f4"/><rect x="1108.4" y="816.2" width="9.2" height="9.2" rx="1.8" fill="#f4f4f4"/>
<circle cx="1220" cy="821.2" r="11.6" fill="none" stroke="#f4f4f4" stroke-width="1.5"/><circle cx="1220" cy="815.4" r="1.4" fill="#f4f4f4"/><path d="M1217.8 819 H1220.4 V826.4 M1217.2 826.6 H1223.4" fill="none" stroke="#f4f4f4" stroke-width="1.6"/>
<circle cx="1315" cy="821.2" r="11.6" fill="none" stroke="#f4f4f4" stroke-width="1.5"/><g fill="#f4f4f4"><circle cx="1309.6" cy="821.2" r="1.35"/><circle cx="1315" cy="821.2" r="1.35"/><circle cx="1320.4" cy="821.2" r="1.35"/></g>
<path d="M1547.4 809 H1562.6 V828.4 L1555.4 832 V812.4 L1562.4 809.2" fill="none" stroke="#e9155d" stroke-width="1.4" stroke-linejoin="round"/><g fill="#000" stroke="#f4f4f4" stroke-width="1.6" stroke-linejoin="round" stroke-linecap="round"><path d="M1543.4 818.2 L1539.4 821 L1540.6 823.2 L1543.6 822 L1543 826 L1539 830.6 L1540.8 832 L1545.8 827.2 L1547 831.8 L1549.6 831.4 L1548.6 824.6 L1549.6 821.4 L1551.4 822.6 L1552.4 820.6 L1549 817.8 Z"/><circle cx="1547" cy="814.6" r="2.7"/></g>
</svg>
<span class="t" style="left:37.30px;top:840px;font-size:12.35px;line-height:12.35px;font-family:'Liberation Sans',sans-serif;font-weight:700;color:#f6f6f6;transform:scaleX(0.9768);">Audio</span>
<span class="t" style="left:134.92px;top:840px;font-size:12.35px;line-height:12.35px;font-family:'Liberation Sans',sans-serif;font-weight:700;color:#f6f6f6;transform:scaleX(0.9806);">Video</span>
<span class="t" style="left:384.21px;top:840px;font-size:12.35px;line-height:12.35px;font-family:'Liberation Sans',sans-serif;font-weight:700;color:#f6f6f6;transform:scaleX(0.9602);">Participants</span>
<span class="t" style="left:519.51px;top:840px;font-size:12.35px;line-height:12.35px;font-family:'Liberation Sans',sans-serif;font-weight:700;color:#f6f6f6;transform:scaleX(0.9631);">Chat</span>
<span class="t" style="left:605.24px;top:840px;font-size:12.35px;line-height:12.35px;font-family:'Liberation Sans',sans-serif;font-weight:700;color:#f6f6f6;transform:scaleX(0.9246);">React</span>
<span class="t" style="left:697.87px;top:840px;font-size:12.35px;line-height:12.35px;font-family:'Liberation Sans',sans-serif;font-weight:700;color:#f6f6f6;transform:scaleX(0.9181);">Share</span>
<span class="t" style="left:777.60px;top:840px;font-size:12.35px;line-height:12.35px;font-family:'Liberation Sans',sans-serif;font-weight:700;color:#f6f6f6;transform:scaleX(0.9654);">Host tools</span>
<span class="t" style="left:856.90px;top:840px;font-size:12.35px;line-height:12.35px;font-family:'Liberation Sans',sans-serif;font-weight:700;color:#f6f6f6;transform:scaleX(0.9779);">AI Companion</span>
<span class="t" style="left:974.31px;top:840px;font-size:12.35px;line-height:12.35px;font-family:'Liberation Sans',sans-serif;font-weight:700;color:#f6f6f6;transform:scaleX(0.9447);">Apps</span>
<span class="t" style="left:1182.96px;top:840px;font-size:12.35px;line-height:12.35px;font-family:'Liberation Sans',sans-serif;font-weight:700;color:#f6f6f6;transform:scaleX(1.0194);">Meeting info</span>
<span class="t" style="left:1300.55px;top:840px;font-size:12.35px;line-height:12.35px;font-family:'Liberation Sans',sans-serif;font-weight:700;color:#f6f6f6;transform:scaleX(1.0262);">More</span>
<span class="t" style="left:1534.04px;top:840px;font-size:12.35px;line-height:12.35px;font-family:'Liberation Sans',sans-serif;font-weight:700;color:#f6f6f6;transform:scaleX(0.9180);">Leave</span>
<span class="t" style="left:1038.54px;top:840px;font-size:13.08px;line-height:13.08px;font-family:'Liberation Sans',sans-serif;font-weight:400;color:#a8a8a8;transform:scaleX(0.9893);">Pause/stop recording</span>
<span class="t" style="left:435.24px;top:814px;font-size:12.35px;line-height:12.35px;font-family:'Liberation Sans',sans-serif;font-weight:400;color:#c2c2c2;transform:scaleX(0.8825);">710</span>
<span class="t" style="left:541.34px;top:808px;font-size:12.21px;line-height:12.21px;font-family:'Liberation Sans',sans-serif;font-weight:700;color:#ffffff;transform:scaleX(0.9227);">3</span>
<!-- s_taskbar -->
<div class="b" style="left:0px;top:858px;width:1600px;height:42px;background:#e3e3e3;"></div>
<div class="b" style="left:51px;top:859px;width:298px;height:41px;background:#fbfbfb;"></div>
<div class="b" style="left:455px;top:858px;width:51px;height:42px;background:#f1f1f1;"></div>
<div class="b" style="left:558.6px;top:858px;width:49.39999999999998px;height:42px;background:#f6a867;"></div>
<div class="b" style="left:713.5px;top:858px;width:51.5px;height:42px;background:#ebebeb;"></div>
<div class="b" style="left:407.5px;top:897px;width:42.5px;height:3px;background:#2b7fd6;"></div>
<div class="b" style="left:455px;top:897px;width:51px;height:3px;background:#2b7fd6;"></div>
<div class="b" style="left:511px;top:897px;width:41.5px;height:3px;background:#2b7fd6;"></div>
<div class="b" style="left:558.6px;top:897px;width:49.39999999999998px;height:3px;background:#f27a1c;"></div>
<div class="b" style="left:604px;top:858px;width:1.3999999999999773px;height:39px;background:#e5935a;"></div>
<div class="b" style="left:713.5px;top:897px;width:51.5px;height:3px;background:#2b7fd6;"></div>
<div class="b" style="left:1595px;top:858px;width:1px;height:42px;background:#b9b9b9;"></div>
<svg width="1600" height="900">
<g fill="#101010"><path d="M16.6 873.4 L23.6 872.4 V879 H16.6 Z"/><path d="M24.6 872.2 L33.6 870.9 V879 H24.6 Z"/><path d="M16.6 880 H23.6 V886.6 L16.6 885.6 Z"/><path d="M24.6 880 H33.6 V888 L24.6 886.8 Z"/></g>
<g fill="none" stroke="#1c1c1c" stroke-width="1.5" stroke-linecap="round"><circle cx="76.2" cy="876.6" r="6.2"/><path d="M71.6 881.4 L64.6 888.6"/></g>
<defs><linearGradient id="spk" x1="0" y1="0" x2="0.4" y2="1"><stop offset="0" stop-color="#fdd95a"/><stop offset="0.55" stop-color="#f8b92a"/><stop offset="1" stop-color="#ee9a1c"/></linearGradient></defs><path d="M301.20 866.40 C304.37 872.99 306.81 875.43 313.40 878.60 C306.81 881.77 304.37 884.21 301.20 890.80 C298.03 884.21 295.59 881.77 289.00 878.60 C295.59 875.43 298.03 872.99 301.20 866.40 Z" fill="url(#spk)" stroke="url(#spk)" stroke-width="1.6" stroke-linejoin="round"/><path d="M324.20 877.40 C325.66 880.42 326.78 881.54 329.80 883.00 C326.78 884.46 325.66 885.58 324.20 888.60 C322.74 885.58 321.62 884.46 318.60 883.00 C321.62 881.54 322.74 880.42 324.20 877.40 Z" fill="#f8c034" stroke="#f8c034" stroke-width="0.9" stroke-linejoin="round"/><path d="M280.00 882.60 C281.01 884.87 281.93 885.79 284.20 886.80 C281.93 887.81 281.01 888.73 280.00 891.00 C278.99 888.73 278.07 887.81 275.80 886.80 C278.07 885.79 278.99 884.87 280.00 882.60 Z" fill="#2e9be8" stroke="#2e9be8" stroke-width="0.7" stroke-linejoin="round" transform="rotate(18 280 886.8)"/><circle cx="317.6" cy="868.4" r="1.8" fill="#e8683a"/><circle cx="336.6" cy="889" r="1.6" fill="#7ab648"/>
<g fill="none" stroke="#333" stroke-width="1.5"><rect x="368.4" y="873" width="8" height="12.2"/><path d="M366 872.4 H378.4 M366 885.8 H378.4"/><path d="M382.2 871 V875.6 M382.2 877 V878.6 M382.2 879.8 V886.2" stroke-width="1.5"/></g>
<path d="M417.4 872.4 q0 -1.4 1.4 -1.4 h6.2 l2.2 2.2 h11.6 q1.4 0 1.4 1.4 v2 h-22.8 z" fill="#e9a821"/><path d="M417.4 875.4 h22.8 v11.2 q0 1.2 -1.2 1.2 h-20.4 q-1.2 0 -1.2 -1.2 z" fill="#fcd35a"/><path d="M422 888 v-6.6 q0 -1.2 1.2 -1.2 h11.4 q1.2 0 1.2 1.2 v6.6 h-3.4 v-4.4 h-7 v4.4 z" fill="#2f86dc"/>
<rect x="467.8" y="866.8" width="25.2" height="25.2" rx="10" fill="#0b5cff"/>
<defs><radialGradient id="ffg" cx="0.6" cy="0.25" r="0.9"><stop offset="0" stop-color="#ffd43a"/><stop offset="0.45" stop-color="#ff8a16"/><stop offset="1" stop-color="#e8273d"/></radialGradient></defs><circle cx="531" cy="880" r="11" fill="url(#ffg)"/><circle cx="531.6" cy="880.8" r="5.9" fill="#6a35c8"/><path d="M520.6 877 C522 871 527 867.4 531.6 868.6 C528.6 870.4 528.4 873.4 530.6 875 C526.4 875 524.4 878 525.2 881.6 C523 881 521.2 879.4 520.6 877 Z" fill="#ff9a1f"/><path d="M535.4 866.4 C538.6 868.6 541.8 872.6 542 878 C540.6 874.6 538.4 872.8 536.4 872.2 C536.8 870 536.4 868 535.4 866.4 Z" fill="#ffbd2e"/>
<rect x="578" y="867.6" width="17.4" height="20.6" rx="1.4" fill="#1490df"/><rect x="578" y="867.6" width="8.7" height="6.8" fill="#0f6cbd"/><rect x="586.7" y="867.6" width="8.7" height="6.8" fill="#28a8ea"/><rect x="578" y="874.4" width="8.7" height="6.8" fill="#1480d8"/><rect x="586.7" y="874.4" width="8.7" height="6.8" fill="#50d9ff"/><path d="M582.6 882.6 H599 V891.2 H582.6 Z" fill="#f1bd92" opacity="0.92"/><path d="M583.6 883.6 L590.8 888.6 L598 883.6" fill="none" stroke="#fdf4ea" stroke-width="1.4"/><rect x="570.6" y="872.4" width="12.4" height="12.4" rx="1.4" fill="#0f64b8"/><circle cx="576.8" cy="878.6" r="2.9" fill="none" stroke="#fff" stroke-width="1.6"/>
<circle cx="641.2" cy="871.6" r="3.1" fill="#5b5fc7"/><circle cx="634.6" cy="870.6" r="4" fill="#7b83eb"/><path d="M637.6 876.4 h8.4 v7.6 a4.2 4.2 0 0 1 -8.4 0 z" fill="#5b5fc7"/><path d="M627.8 876.2 h12.6 v9 a6.3 6.3 0 0 1 -12.6 0 z" fill="#7b83eb"/><rect x="622.4" y="873.4" width="12.4" height="12.4" rx="1.4" fill="#4b53bc"/><path d="M625.6 876.8 h6 M628.6 876.8 v6.4" stroke="#fff" stroke-width="1.6"/>
<g transform="translate(686.8 878.4) scale(0.9) translate(-687.1 -880.5)"><path d="M683 869.8 h8 l8.6 14.8 h-8 z" fill="#fbbc04"/><path d="M683 869.8 l-8.4 14.6 l4 6.8 l8.4 -14.6 z" fill="#1ea362"/><path d="M678.6 891.2 h17 l4 -6.6 h-17 z" fill="#4285f4"/><path d="M691.6 884.6 h8 l-4 6.6 z" fill="#e94235"/></g>
<circle cx="738.4" cy="878.8" r="11.7" fill="#e8433a"/><path d="M738.4 878.8 L728.3 873 A11.7 11.7 0 0 0 732.6 889 L738.4 878.8 Z" fill="#2ba24c"/><path d="M738.4 878.8 L732.6 889 A11.7 11.7 0 0 0 748.5 873 H738.4 Z" fill="#fbc116"/><circle cx="738.4" cy="878.8" r="5.3" fill="#fff"/><circle cx="738.4" cy="878.8" r="4.2" fill="#3b78e7"/><circle cx="745.4" cy="886.2" r="7.6" fill="#2c2624"/><circle cx="746.4" cy="884.6" r="3" fill="#b98f7a"/><path d="M741 892 q5 -5 10 -1 l-2 2.4 q-4 1.6 -8 -1.4 z" fill="#d8d4d0" opacity="0.8"/>
<path d="M1328.2 881.2 L1334.6 874.8 L1341 881.2" fill="none" stroke="#2a2a2a" stroke-width="1.2"/><rect x="1364.2" y="871" width="7.2" height="11.6" rx="1.6" fill="#111"/><path d="M1362.8 879 v1.4 a4.9 4.9 0 0 0 9.8 0 v-1.4 M1367.8 885.4 v2 M1365 887.6 h5.6" fill="none" stroke="#555" stroke-width="1"/><g fill="none" stroke="#2c2c2c" stroke-width="1.3" stroke-linecap="round"><path d="M1402.6 884.6 L1408.8 872.4 q1.6 -1.6 3 0 q0.6 1 -0.2 2.4 L1405.2 886 z"/><path d="M1402.6 884.6 q-4.6 -1.6 -5 1.4 q0 2.4 3.8 2.2 q6 -0.6 10 -6.4"/></g><g fill="none" stroke="#2c2c2c" stroke-width="1.2"><rect x="1438.8" y="873" width="15.6" height="12.2" rx="1.2"/><path d="M1438.8 881.4 h15.6 M1446.6 881.4 v3.8"/></g>
<path d="M1557.2 871.6 h16.4 v13 h-13 l-3.4 0 z" fill="#0e0e0e"/><path d="M1560.2 875.2 h10.4 M1560.2 878.2 h10.4 M1560.2 881.2 h6.6" stroke="#e3e3e3" stroke-width="1"/><circle cx="1573.8" cy="886.4" r="9.3" fill="#e3e3e3" fill-opacity="0.82" stroke="#8a8a8a" stroke-width="0.9"/>
</svg>
<span class="t" style="left:97.05px;top:873px;font-size:15.41px;line-height:15.41px;font-family:'Liberation Sans',sans-serif;font-weight:400;color:#3a3a3a;">Type here to search</span>
<span class="t" style="left:471.11px;top:876px;font-size:7.60px;line-height:7.60px;font-family:'Liberation Sans',sans-serif;font-weight:700;color:#ffffff;transform:scaleX(0.9440);">zoom</span>
<span class="t" style="left:1494.65px;top:866px;font-size:11.34px;line-height:11.34px;font-family:'Liberation Sans',sans-serif;font-weight:400;color:#1e1e1e;transform:scaleX(1.0396);">9:57</span>
<span class="t" style="left:1474.77px;top:885px;font-size:11.34px;line-height:11.34px;font-family:'Liberation Sans',sans-serif;font-weight:400;color:#1e1e1e;transform:scaleX(1.1093);">25/09/2025</span>
<span class="t" style="left:1566.33px;top:881px;font-size:12.21px;line-height:12.21px;font-family:'Liberation Sans',sans-serif;font-weight:400;color:#111111;transform:scaleX(1.0888);">20</span>
</body></html>
